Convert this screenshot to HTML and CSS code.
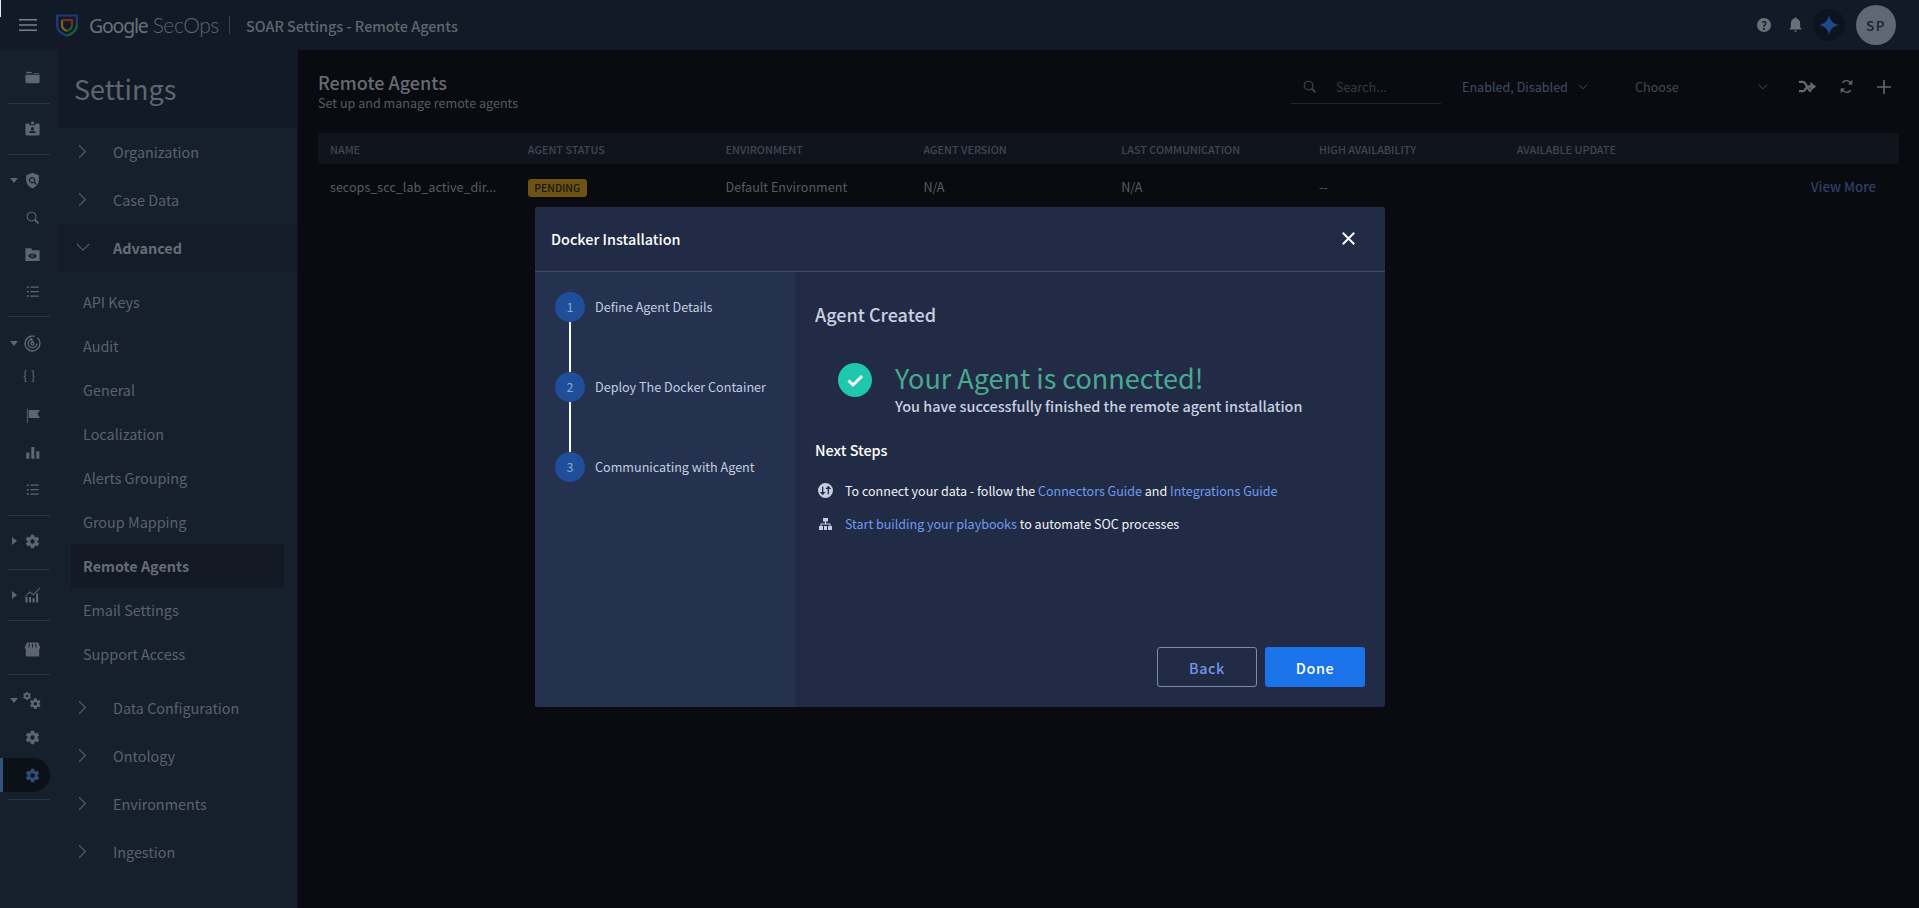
FILE: index.html
```html
<!DOCTYPE html>
<html lang="en">
<head>
<meta charset="utf-8">
<title>SOAR Settings - Remote Agents</title>
<link rel="stylesheet" href="styles.css">
</head>
<body>
<svg class="defs" width="0" height="0" aria-hidden="true">
  <symbol id="i-folder" viewBox="0 0 24 24"><path d="M3 4h7l2 2H3zM2 8h20v10a2 2 0 0 1-2 2H4a2 2 0 0 1-2-2zM14 6h6a2 2 0 0 1 2 1H14z"/></symbol>
  <symbol id="i-badge" viewBox="0 0 24 24"><path fill-rule="evenodd" d="M10 2h4v4h-4zM8 5v2.5h8V5h4a2 2 0 0 1 2 2v13a2 2 0 0 1-2 2H4a2 2 0 0 1-2-2V7a2 2 0 0 1 2-2zM12 10a2.2 2.2 0 1 0 0 4.400a2.200 2.200 0 0 0 0-4.400zM7.500 18.500h9V17.300c0-1.500-3-2.200-4.500-2.200s-4.500.7-4.500 2.200z"/></symbol>
  <symbol id="i-shield" viewBox="0 0 24 24"><path fill-rule="evenodd" d="M12 1 21 4.500V11c0 5.500-3.700 10.300-9 12-5.300-1.700-9-6.500-9-12V4.500zM11.500 7a4.500 4.500 0 1 0 2.500 8.200l3 3 1.300-1.300-3-3A4.500 4.500 0 0 0 11.500 7zm0 1.800a2.700 2.700 0 1 1 0 5.400 2.700 2.700 0 0 1 0-5.400z"/></symbol>
  <symbol id="i-search" viewBox="0 0 24 24"><path fill="none" stroke="currentColor" stroke-width="1.800" d="M10.500 3.500a7 7 0 1 1 0 14 7 7 0 0 1 0-14z"/><path stroke="currentColor" stroke-width="3" d="m15.500 15.500 6 6"/></symbol>
  <symbol id="i-eyefolder" viewBox="0 0 24 24"><path fill-rule="evenodd" d="M2 3h8l2 3h10v15H2zM12 10.500c-3 0-5 1.800-6 3.500 1 1.700 3 3.500 6 3.500s5-1.800 6-3.500c-1-1.700-3-3.500-6-3.500zm0 1.500a2 2 0 1 1 0 4 2 2 0 0 1 0-4zm0 1a1 1 0 1 0 0 2 1 1 0 0 0 0-2z"/></symbol>
  <symbol id="i-list" viewBox="0 0 24 24"><path d="M3 4h3v2.500H3zM8.500 4H22v2H8.500zM3 11h3v2.500H3zM8.500 11.200H22v2H8.500zM3 18h3v2.500H3zM8.500 18.300H22v2H8.500z"/></symbol>
  <symbol id="i-radar" viewBox="0 0 24 24"><g fill="none" stroke="currentColor" stroke-width="2"><path d="M15 2A10.500 10.500 0 1 0 22.500 12 10.500 10.500 0 0 0 19 4"/><path d="M12 6a6 6 0 1 0 6 6"/><path d="M12 10a2 2 0 1 0 2 2L9 4"/></g></symbol>
  <symbol id="i-flag" viewBox="0 0 24 24"><path d="M3 1h1.500v23H3zM6 3h18l-4 6 4 7H6z"/></symbol>
  <symbol id="i-bars" viewBox="0 0 24 24"><path d="M2 12h5v10H2zM10 3h5v19h-5zM18 10h5v12h-5z"/></symbol>
  <symbol id="i-gear" viewBox="0 0 24 24"><path fill-rule="evenodd" d="M19.140 12.940c.04-.3.06-.61.06-.94 0-.32-.02-.64-.07-.94l2.030-1.580a.49.49 0 0 0 .12-.61l-1.920-3.320a.488.488 0 0 0-.59-.22l-2.390.96c-.5-.38-1.030-.7-1.620-.94l-.36-2.540a.484.484 0 0 0-.48-.41h-3.840c-.24 0-.43.17-.47.41l-.36 2.540c-.59.24-1.130.57-1.620.94l-2.390-.96c-.22-.08-.47 0-.59.22L2.740 8.870c-.12.21-.08.47.12.61l2.030 1.580c-.05.3-.09.63-.09.94s.02.64.07.94l-2.030 1.580a.49.49 0 0 0-.12.61l1.920 3.320c.12.22.37.29.59.22l2.390-.96c.5.38 1.030.7 1.620.94l.36 2.540c.05.24.24.41.48.41h3.840c.24 0 .44-.17.47-.41l.36-2.540c.59-.24 1.130-.56 1.620-.94l2.390.96c.22.08.47 0 .59-.22l1.920-3.320c.12-.22.07-.47-.12-.61l-2.010-1.580zM12 15.100a3.100 3.100 0 1 1 0-6.200 3.100 3.100 0 0 1 0 6.200z"/></symbol>
  <symbol id="i-chart" viewBox="0 0 24 24"><path d="M2 22h3v-8H2zM7 22h3v-8H7zM12 22h3v-6h-3zM17 22h3V9h-3zM1.500 13 8 6l5 4 9-9 1 1-10 10-5-4-6 6z"/></symbol>
  <symbol id="i-store" viewBox="0 0 24 24"><path fill-rule="evenodd" d="M4 2h16l3 7a3 3 0 0 1-1.500 2.500V22h-19V11.500A3 3 0 0 1 1 9zM7 4 6.200 9H7.700L8.200 4zM11.300 4v5h1.400V4zM15.800 4l.5 5h1.500L17 4z"/></symbol>
  <symbol id="i-gears" viewBox="0 0 30 30"><use href="#i-gear" x="0" y="0" width="15" height="15"/><use href="#i-gear" x="10" y="9" width="20" height="20"/></symbol>
  <symbol id="i-chev" viewBox="0 0 10 16"><path fill="none" stroke="currentColor" stroke-width="1.400" d="m1.200 1 7 7-7 7"/></symbol>
  <symbol id="i-down" viewBox="0 0 16 10"><path fill="none" stroke="currentColor" stroke-width="1.400" d="m1 1 7 7 7-7"/></symbol>
</svg>

<div class="corner-mark"></div>

<header class="topbar">
  <svg class="hamburger" viewBox="0 0 18 12"><path d="M0 0h18v1.600H0zM0 5.200h18v1.600H0zM0 10.400h18V12H0z"/></svg>
  <svg class="logo" viewBox="0 0 22 24">
    <path fill="none" stroke="#1d3d78" stroke-width="2.200" d="M1.200 2.500h19.600V13c0 4.500-4.500 7.700-9.800 9.700C5.700 20.700 1.200 17.500 1.200 13z"/>
    <path fill="none" stroke="#1f5c30" stroke-width="2.200" d="M20.800 12c0 5.200-4.500 8.700-9.800 10.700"/>
    <path fill="none" stroke="#7b6415" stroke-width="2.200" d="M6 7v5.500c0 2.500 2 4.300 5 5.500"/>
    <path fill="none" stroke="#7c2a22" stroke-width="2.200" d="M6 7.200h10V12"/>
    <path fill="none" stroke="#1f5c30" stroke-width="2.200" d="M16 12c0 2.800-2 4.800-5 6"/>
  </svg>
  <span class="brand"><span class="brand-g">Google</span> <span class="brand-s">SecOps</span></span>
  <span class="top-sep"></span>
  <span class="page-title">SOAR Settings - Remote Agents</span>
  <div class="top-actions">
    <span class="help">?</span>
    <svg class="bell" viewBox="0 0 14 16"><path d="M7 0c.7 0 1.200.5 1.200 1.100C10.500 1.700 12 3.700 12 6v4.500l1.500 1.500v.8H.5V12L2 10.500V6c0-2.300 1.500-4.300 3.800-4.900C5.800.5 6.300 0 7 0zM5.500 14h3a1.500 1.500 0 0 1-3 0z"/></svg>
    <span class="spark"><svg viewBox="0 0 20 20"><defs><linearGradient id="sg" x1="0" y1="0" x2="1" y2="1"><stop offset="0" stop-color="#1b4f9e"/><stop offset="1" stop-color="#26437a"/></linearGradient></defs><path fill="url(#sg)" d="M10 0c.8 5.400 4.200 9 10 10-5.800 1-9.200 4.600-10 10-.8-5.400-4.200-9-10-10 5.800-1 9.200-4.600 10-10z"/></svg></span>
    <span class="avatar">SP</span>
  </div>
</header>

<div class="body">
  <nav class="rail">
    <div class="rail-group g1"><div class="rail-item"><svg class="ri"><use href="#i-folder"/></svg></div></div>
    <div class="rail-group g2"><div class="rail-item"><svg class="ri"><use href="#i-badge"/></svg></div></div>
    <div class="rail-group g3">
      <div class="rail-item caret"><svg class="ri"><use href="#i-shield"/></svg></div>
      <div class="rail-item"><svg class="ri small"><use href="#i-search"/></svg></div>
      <div class="rail-item"><svg class="ri"><use href="#i-eyefolder"/></svg></div>
      <div class="rail-item"><svg class="ri small"><use href="#i-list"/></svg></div>
    </div>
    <div class="rail-group g4">
      <div class="rail-item caret"><svg class="ri"><use href="#i-radar"/></svg></div>
      <div class="rail-item rail-braces">{ }</div>
      <div class="rail-item"><svg class="ri small"><use href="#i-flag"/></svg></div>
      <div class="rail-item"><svg class="ri small"><use href="#i-bars"/></svg></div>
      <div class="rail-item"><svg class="ri small"><use href="#i-list"/></svg></div>
    </div>
    <div class="rail-group g5"><div class="rail-item caret-r"><svg class="ri"><use href="#i-gear"/></svg></div></div>
    <div class="rail-group g6"><div class="rail-item caret-r"><svg class="ri"><use href="#i-chart"/></svg></div></div>
    <div class="rail-group g7"><div class="rail-item"><svg class="ri"><use href="#i-store"/></svg></div></div>
    <div class="rail-group g8">
      <div class="rail-item caret"><svg class="ri wide"><use href="#i-gears"/></svg></div>
      <div class="rail-item"><svg class="ri"><use href="#i-gear"/></svg></div>
      <div class="rail-item active"><svg class="ri"><use href="#i-gear"/></svg></div>
    </div>
  </nav>

  <aside class="panel">
    <h1 class="panel-title">Settings</h1>
    <div class="acc"><svg class="chev"><use href="#i-chev"/></svg>Organization</div>
    <div class="acc"><svg class="chev"><use href="#i-chev"/></svg>Case Data</div>
    <div class="acc open"><svg class="chev-d"><use href="#i-down"/></svg>Advanced</div>
    <ul class="sub">
      <li>API Keys</li>
      <li>Audit</li>
      <li>General</li>
      <li>Localization</li>
      <li>Alerts Grouping</li>
      <li>Group Mapping</li>
      <li class="current">Remote Agents</li>
      <li>Email Settings</li>
      <li>Support Access</li>
    </ul>
    <div class="acc"><svg class="chev"><use href="#i-chev"/></svg>Data Configuration</div>
    <div class="acc"><svg class="chev"><use href="#i-chev"/></svg>Ontology</div>
    <div class="acc"><svg class="chev"><use href="#i-chev"/></svg>Environments</div>
    <div class="acc"><svg class="chev"><use href="#i-chev"/></svg>Ingestion</div>
  </aside>

  <main class="main">
    <div class="main-head">
      <div class="titles">
        <h2>Remote Agents</h2>
        <p>Set up and manage remote agents</p>
      </div>
      <div class="toolbar">
        <div class="search"><svg class="search-i"><use href="#i-search"/></svg><span>Search...</span></div>
        <div class="filter f1"><span>Enabled, Disabled</span><svg class="fd"><use href="#i-down"/></svg></div>
        <div class="filter f2"><span>Choose</span><svg class="fd"><use href="#i-down"/></svg></div>
        <span class="tool"><svg viewBox="0 0 18 14"><path fill="none" stroke="currentColor" stroke-width="2.400" d="M0 2h4c2 0 3 2 4.500 5S11 12 13 12M0 12h4c2 0 3-2 4.500-5H17"/><path d="m12 2 6 5-6 5z"/></svg></span>
        <span class="tool"><svg viewBox="0 0 16 18"><path fill="none" stroke="currentColor" stroke-width="1.600" d="M14 6.500A6.300 6.300 0 0 0 3 4.500M2 11.500a6.300 6.300 0 0 0 11 2"/><path d="M15 1v5.500H9.800zM1 17v-5.500h5.200z"/></svg></span>
        <span class="tool plus"><svg viewBox="0 0 14 14"><path d="M6.200 0h1.600v6.200H14v1.600H7.800V14H6.200V7.800H0V6.200h6.200z"/></svg></span>
      </div>
    </div>
    <div class="thead">
      <span>Name</span><span>Agent Status</span><span>Environment</span><span>Agent Version</span><span>Last Communication</span><span>High Availability</span><span>Available Update</span>
    </div>
    <div class="trow">
      <span class="ellip">secops_scc_lab_active_dir...</span>
      <span><b class="badge">PENDING</b></span>
      <span>Default Environment</span>
      <span>N/A</span>
      <span>N/A</span>
      <span>--</span>
      <span></span>
      <a class="view-more">View More</a>
    </div>
  </main>
</div>

<section class="modal">
  <header class="modal-head">
    <span>Docker Installation</span>
    <svg class="close" viewBox="0 0 12 12"><path fill="none" stroke="#fff" stroke-width="1.800" d="m.7.7 10.600 10.600M11.300.7.7 11.300"/></svg>
  </header>
  <div class="modal-body">
    <ol class="steps">
      <li class="step"><span class="num">1</span><span>Define Agent Details</span></li>
      <li class="step"><span class="num">2</span><span>Deploy The Docker Container</span></li>
      <li class="step"><span class="num">3</span><span>Communicating with Agent</span></li>
    </ol>
    <div class="content">
      <h3>Agent Created</h3>
      <div class="success">
        <svg class="check" viewBox="0 0 34 34"><circle cx="17" cy="17" r="17" fill="#1fc7ad"/><path fill="none" stroke="#fff" stroke-width="3" d="m10.500 17.500 4.500 4.500 9-9"/></svg>
        <div>
          <div class="success-title">Your Agent is connected!</div>
          <div class="success-sub">You have successfully finished the remote agent installation</div>
        </div>
      </div>
      <h4>Next Steps</h4>
      <div class="next-row">
        <svg class="next-i" viewBox="0 0 16 16"><path fill-rule="evenodd" d="M8 0a8 8 0 1 1 0 16A8 8 0 0 1 8 0zM4.300 4v5.500H2L5 13l3-3.500H5.700V4zM11 3 8 6.500h2.300V12h1.400V6.500H14z"/></svg>
        <span>To connect your data - follow the <a>Connectors Guide</a> and <a>Integrations Guide</a></span>
      </div>
      <div class="next-row">
        <svg class="next-i tree" viewBox="0 0 14 12"><path d="M4.500 0h5v3.500H7.600v2H12V8h1.500v4h-4V8H11V6.500H3V8h1.500v4h-4V8H2V5.500h4.400v-2H4.500zM5.500 8h3v4h-3z"/></svg>
        <span><a>Start building your playbooks</a> to automate SOC processes</span>
      </div>
      <div class="actions">
        <button class="btn back">Back</button>
        <button class="btn done">Done</button>
      </div>
    </div>
  </div>
</section>
</body>
</html>
```

FILE: styles.css
```css
* { box-sizing: border-box; }
html, body { margin: 0; height: 100%; }
body {
  width: 1919px;
  height: 908px;
  overflow: hidden;
  position: relative;
  display: flex;
  flex-direction: column;
  background: #0a0b10;
  font-family: "Noto Sans CJK SC", "Noto Sans", sans-serif;
  font-size: 12.600px;
  color: #5f6670;
}
.defs { position: absolute; }
h1, h2, h3, h4, p, ul, ol { margin: 0; padding: 0; font-weight: normal; list-style: none; }

.corner-mark { position: absolute; left: 0; top: 0; width: 1px; height: 17px; background: #e8e8f0; }

/* top bar */
.topbar {
  height: 50px;
  flex: none;
  display: flex;
  align-items: center;
  padding-left: 19px;
  background: #121a27;
}
.hamburger { width: 18px; height: 12px; fill: #7a8089; margin-right: 19px; }
.logo { width: 22px; height: 24px; margin-right: 11px; }
.brand { width: 125px; white-space: nowrap; line-height: 30px; display: flex; align-items: baseline; gap: 5px; }
.brand-g { font-family: "Noto Sans", sans-serif; font-size: 19.500px; letter-spacing: -1.200px; color: #6a7079; }
.brand-s { font-family: "Lato", sans-serif; font-weight: 300; font-size: 21px; letter-spacing: -0.4px; color: #5e656e; }
.top-sep { width: 1px; height: 18px; background: #39414e; margin: 0 16px 0 15px; }
.page-title { font-size: 14.400px; font-weight: 500; color: #5f6670; }
.top-actions { margin-left: auto; display: flex; align-items: center; padding-right: 23px; }
.help {
  width: 14px; height: 14px; border-radius: 50%; background: #6a7079; color: #121a27;
  font-size: 11px; font-weight: 700; line-height: 14px; text-align: center; margin-right: 18px;
}
.bell { width: 13px; height: 16px; fill: #6a7079; margin-right: 11px; }
.spark {
  width: 32px; height: 32px; border-radius: 50%; background: #0d1420;
  display: flex; align-items: center; justify-content: center; margin-right: 11px;
}
.spark svg { width: 20px; height: 20px; }
.avatar {
  width: 40px; height: 40px; border-radius: 50%; background: #5f6874; color: #1a212c;
  font-size: 13.500px; font-weight: 500; letter-spacing: 1.500px; line-height: 40px; text-align: center;
}

.body { flex: 1; display: flex; min-height: 0; }

/* icon rail */
.rail { width: 58px; flex: none; background: #161f2c; }
.rail-group { position: relative; display: flex; flex-direction: column; }
.rail-group::after {
  content: ""; position: absolute; left: 8px; right: 8px; bottom: 0; height: 1px; background: #2a3342;
}
.g1 { height: 54px; padding-top: 9px; }
.g2 { height: 51px; padding-top: 6px; }
.g3 { height: 162px; padding-top: 7px; }
.g4 { height: 199px; padding-top: 8px; }
.g5 { height: 54px; padding-top: 7px; }
.g6 { height: 51px; padding-top: 7px; }
.g7 { height: 54px; padding-top: 10px; }
.g8 { height: 125px; padding-top: 7px; }
.rail-item {
  height: 37px; flex: none; position: relative;
  display: flex; align-items: center; justify-content: center;
  padding-left: 6px; padding-right: 0; color: #5d6570;
}
.rail-item.caret::before {
  content: ""; position: absolute; left: 10px; top: 16px;
  border: 4px solid transparent; border-top: 5px solid #5d6570; border-bottom: 0;
}
.rail-item.caret-r::before {
  content: ""; position: absolute; left: 12px; top: 14px;
  border: 4px solid transparent; border-left: 5px solid #5d6570; border-right: 0;
}
.ri { width: 17px; height: 17px; fill: currentColor; }
.ri.small { width: 15px; height: 15px; }
.ri.wide { width: 20px; height: 20px; }
.rail-braces { font-size: 12px; font-weight: 500; justify-content: flex-start; padding-left: 23px; letter-spacing: 0.5px; margin-top: -6px; margin-bottom: 4px; }
.rail-item.active {
  width: 50px; height: 34px; margin-top: 2px; padding-left: 21px; padding-right: 0;
  justify-content: flex-start;
  background: #0c1118; border-left: 3px solid #34527f; border-radius: 0 17px 17px 0;
  color: #2f4b78;
}

/* settings panel */
.panel { width: 240px; flex: none; background: #161f2c; border-right: 1px solid #0f141d; overflow: hidden; }
.panel-title {
  height: 78px; background: #121a27; padding-left: 16px;
  font-size: 27px; line-height: 78px; color: #5f6670;
}
.acc {
  height: 48px; display: flex; align-items: center; font-size: 14.400px; color: #5b626c;
  padding: 0 0 2px 20px;
}
.acc.open { background: #141c29; font-weight: 700; color: #666c75; }
.chev { width: 9px; height: 15px; margin-right: 26px; color: #4f5662; fill: none; }
.chev-d { width: 14px; height: 9px; margin-left: -2px; margin-right: 23px; color: #4f5662; fill: none; }
.sub { padding: 8px 13px; }
.sub li { height: 44px; line-height: 44px; font-size: 14.400px; padding-left: 12px; color: #5b626c; }
.sub li.current { background: #121924; font-weight: 700; color: #666c75; }

/* main */
.main { flex: 1; min-width: 0; padding: 0 20px; background: #0a0b10; }
.main-head { height: 83px; padding-top: 18px; display: flex; justify-content: space-between; align-items: flex-start; }
.titles { padding-top: 2px; }
.titles h2 { font-size: 18px; line-height: 24px; font-weight: 500; color: #666c75; }
.titles p { font-size: 12.600px; line-height: 18px; color: #555b65; }
.toolbar { display: flex; align-items: center; height: 36px; color: #3d4655; padding-top: 1px; }
.search {
  width: 150px; height: 35px; display: flex; align-items: center; border-bottom: 1px solid #1f2531;
  padding: 1px 0 0 11px; color: #333a46; margin-right: 21px;
}
.search-i { width: 15px; height: 15px; margin-right: 19px; color: #3f4550; fill: #3f4550; }
.filter { display: flex; align-items: center; height: 36px; color: #414c61; }
.f1 { width: 173px; }
.f1 .fd { margin-left: 10px; }
.f2 { width: 138px; margin-right: 15px; justify-content: space-between; color: #434a55; padding-right: 5px; }
.fd { width: 10px; height: 6px; color: #555c66; }
.tool { width: 38px; height: 36px; display: flex; align-items: center; justify-content: center; color: #646870; fill: #646870; margin-right: 1px; }
.tool svg { width: 17px; height: 15px; }
.tool.plus { width: 30px; margin: 0 0 0 3px; }
.tool.plus svg { width: 14px; height: 14px; }

.thead, .trow { display: grid; grid-template-columns: repeat(7, 197.800px) 1fr; padding-left: 12px; align-items: center; }
.thead {
  height: 31px; background: #10151d;
  font-size: 10.800px; font-weight: 500; text-transform: uppercase; color: #3f4753;
}
.trow { height: 46px; padding-bottom: 2px; color: #555b65; }
.ellip { white-space: nowrap; }
.badge {
  display: block; width: 59px; height: 18px; margin-top: 4px; border-radius: 3px; background: #6e5414; color: #19140a;
  font-size: 10.400px; font-weight: 500; line-height: 18px; text-align: center;
}
.view-more { text-align: right; font-size: 13.300px; font-weight: 500; color: #2d3f66; padding-right: 23px; }

/* modal */
.modal {
  position: absolute; left: 535px; top: 207px; width: 850px; height: 500px;
  background: #212b45; border-radius: 3px; overflow: hidden;
  display: flex; flex-direction: column;
}
.modal-head {
  height: 65px; flex: none; display: flex; align-items: center; justify-content: space-between;
  padding: 0 30px 1px 16px; border-bottom: 1px solid #3b4a6b;
  font-size: 14.400px; font-weight: 500; color: #fff;
}
.close { width: 13px; height: 13px; }
.modal-body { flex: 1; display: flex; min-height: 0; }
.steps { width: 260px; flex: none; background: #243250; padding: 20px 0 0 20px; }
.step { height: 80px; display: flex; align-items: flex-start; position: relative; color: #c3cde0; font-size: 12.600px; line-height: 30px; }
.step:not(:last-child)::after {
  content: ""; position: absolute; left: 14px; top: 30px; width: 2px; height: 50px; background: #fff;
}
.num {
  width: 30px; height: 30px; border-radius: 50%; background: #1f4f9a; color: #8ba6cc;
  text-align: center; margin-right: 10px;
}
.content { flex: 1; padding: 0 20px; position: relative; }
.content h3 { margin-top: 29px; font-size: 18px; line-height: 26px; font-weight: 500; color: #c8d0e0; }
.success { display: flex; margin-top: 26px; padding-left: 23px; }
.check { width: 34px; height: 34px; flex: none; margin-right: 23px; margin-top: 10px; }
.success-title { font-size: 27px; line-height: 36px; color: #4aa892; margin-top: 7px; }
.success-sub { font-size: 14.400px; line-height: 22px; font-weight: 500; color: #c8d0e0; margin-top: -1px; }
.content h4 { margin: 22px 0 13px; font-size: 14.400px; line-height: 22px; font-weight: 500; color: #fff; }
.next-row { display: flex; align-items: center; height: 33px; color: #f0f3f8; font-size: 12.530px; }
.next-i { width: 15px; height: 15px; fill: #c3cde0; margin: 0 12px 0 3px; flex: none; }
.next-i.tree { height: 12px; }
.next-row a { color: #6f9bf0; }
.actions { position: absolute; right: 20px; bottom: 20px; display: flex; gap: 8px; }
.btn {
  width: 100px; height: 40px; border-radius: 3px; font: 500 14.400px "Noto Sans CJK SC", sans-serif; letter-spacing: 0.6px;
}
.back { background: transparent; border: 1px solid #7d8cab; color: #7097e8; }
.done { background: #1a73e8; border: 0; color: #fff; }
```
